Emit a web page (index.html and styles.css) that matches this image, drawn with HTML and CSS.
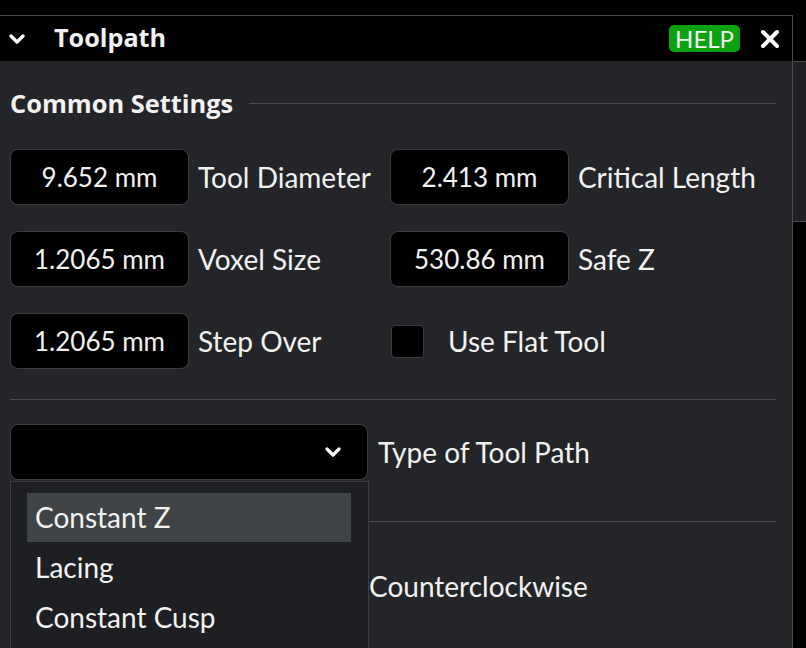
FILE: index.html
```html
<!DOCTYPE html>
<html lang="en">
<head>
  <meta charset="UTF-8">
  <title>Toolpath</title>
  <link rel="stylesheet" href="styles.css">
</head>
<body>
  <div class="page">
    <div class="panel">
      <div class="panel-header">
        <svg class="caret" width="16" height="10" viewBox="0 0 16 10"><path d="M2 2 L8 8 L14 2" fill="none" stroke="#fff" stroke-width="3.2" stroke-linecap="round" stroke-linejoin="round"/></svg>
        <span class="panel-title">Toolpath</span>
        <span class="help">HELP</span>
        <svg class="close" width="20" height="20" viewBox="0 0 20 20"><path d="M3 3 L17 17 M17 3 L3 17" stroke="#fff" stroke-width="4" stroke-linecap="round"/></svg>
      </div>
      <div class="panel-body">
        <div class="section-title">
          <span>Common Settings</span>
          <div class="rule"></div>
        </div>
        <div class="fields">
          <div class="field"><div class="value">9.652 mm</div><label>Tool Diameter</label></div>
          <div class="field"><div class="value">2.413 mm</div><label>Critical Length</label></div>
          <div class="field"><div class="value">1.2065 mm</div><label>Voxel Size</label></div>
          <div class="field"><div class="value">530.86 mm</div><label>Safe Z</label></div>
          <div class="field"><div class="value">1.2065 mm</div><label>Step Over</label></div>
          <div class="field check"><div class="box"></div><label>Use Flat Tool</label></div>
        </div>
        <div class="divider"></div>
        <div class="select-row">
          <div class="select">
            <svg width="16" height="10" viewBox="0 0 16 10"><path d="M2 2 L8 8 L14 2" fill="none" stroke="#fff" stroke-width="3.2" stroke-linecap="round" stroke-linejoin="round"/></svg>
          </div>
          <label>Type of Tool Path</label>
          <div class="dropdown">
            <div class="option active">Constant Z</div>
            <div class="option">Lacing</div>
            <div class="option">Constant Cusp</div>
          </div>
        </div>
        <div class="divider second"></div>
        <div class="direction-row">
          <label>Counterclockwise</label>
        </div>
      </div>
    </div>
    <div class="side">
      <div class="side-top"></div>
      <div class="side-pane"></div>
    </div>
  </div>
</body>
</html>
```

FILE: styles.css
```css
body {
  margin: 0;
  background: #000;
  font-family: Lato, "Noto Sans", sans-serif;
  color: #f2f2f2;
  overflow: hidden;
}
.page {
  display: flex;
  padding-top: 15px;
  height: 633px;
}
.panel {
  width: 792px;
  border-top: 1px solid #4b4b4b;
  border-right: 1px solid #4b4b4b;
  display: flex;
  flex-direction: column;
}
.panel-header {
  height: 45px;
  background: #000;
  display: flex;
  align-items: center;
  padding: 0 12px 0 9px;
}
.panel-title {
  font-family: "Open Sans", "Noto Sans", sans-serif;
  font-weight: bold;
  font-size: 25.2px;
  line-height: 30px;
  margin: -3px 0 0 29px;
  flex: 1;
}
.help {
  background: #0aa30f;
  border-radius: 5px;
  font-size: 24px;
  line-height: 27px;
  padding: 0 6px 0 6px;
  margin-right: 20px;
}
.panel-body {
  flex: 1;
  background: #232529;
  padding: 0 16px 0 10px;
  position: relative;
  overflow: hidden;
}
.section-title {
  display: flex;
  align-items: center;
  margin-top: 24px;
  height: 36px;
  font-family: "Open Sans", "Noto Sans", sans-serif;
  font-weight: bold;
  font-size: 25.4px;
}
.section-title .rule {
  flex: 1;
  height: 1px;
  background: #4a4c50;
  margin-left: 16px;
}
.fields {
  display: grid;
  grid-template-columns: 380px 1fr;
  row-gap: 26px;
  margin-top: 28px;
}
.field {
  display: flex;
  align-items: center;
  gap: 9px;
  font-size: 28px;
}
.value {
  box-sizing: border-box;
  width: 179px;
  height: 56px;
  background: #000;
  border: 1px solid #3c3d40;
  border-radius: 8px;
  display: flex;
  align-items: center;
  justify-content: center;
  font-size: 26px;
}
.field.check {
  gap: 24px;
}
.box {
  box-sizing: border-box;
  width: 33px;
  height: 33px;
  margin-left: 1px;
  background: #000;
  border: 1px solid #3c3d40;
  border-radius: 4px;
}
.divider {
  height: 1px;
  background: #4a4c50;
  margin-top: 30px;
}
.select-row {
  display: flex;
  align-items: center;
  gap: 10px;
  margin-top: 24px;
  font-size: 28px;
  position: relative;
}
.select {
  box-sizing: border-box;
  width: 358px;
  height: 56px;
  background: #000;
  border: 1px solid #3c3d40;
  border-radius: 8px;
  display: flex;
  align-items: center;
  justify-content: flex-end;
  padding-right: 26px;
}
.dropdown {
  position: absolute;
  top: 57px;
  left: 0;
  box-sizing: border-box;
  width: 359px;
  height: 168px;
  background: #1d1f22;
  border: 1px solid #3c3e42;
  border-bottom: none;
  padding: 11px 17px 0 16px;
  z-index: 2;
}
.option {
  height: 50px;
  line-height: 49px;
  padding-left: 8px;
}
.option.active {
  background: #414447;
  height: 49px;
  margin-bottom: 1px;
}
.divider.second {
  margin-top: 41px;
}
.direction-row {
  display: flex;
  align-items: center;
  height: 56px;
  margin-top: 36px;
  padding-left: 359px;
  font-size: 28px;
}
.side {
  flex: 1;
  display: flex;
  flex-direction: column;
}
.side-top {
  height: 46px;
}
.side-pane {
  height: 159px;
  background: #1f2125;
  border-top: 1px solid #4b4b4b;
  border-bottom: 1px solid #4b4b4b;
}
```
